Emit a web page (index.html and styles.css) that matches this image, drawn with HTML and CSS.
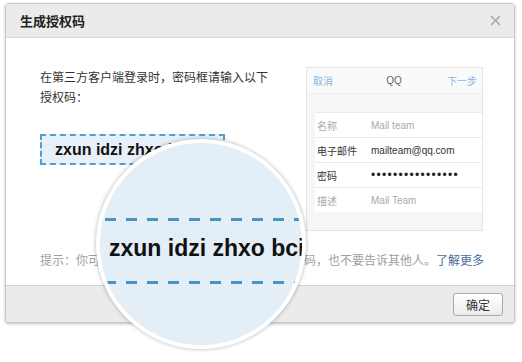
FILE: index.html
```html
<!DOCTYPE html>
<html lang="zh-CN">

<head>
  <meta charset="UTF-8" />
  <title>生成授权码</title>
  <link rel="stylesheet" href="styles.css">
</head>

<body>

  <div class="dialog">
    <div class="dialog-head">
      <span class="dialog-title">生成授权码</span>
      <svg class="close" width="11" height="11" viewBox="0 0 11 11">
        <path d="M1 1L10 10M10 1L1 10" stroke="#a8a8a8" stroke-width="1.6" fill="none" />
      </svg>
    </div>

    <div class="dialog-body">
      <div class="row">
        <div class="left">
          <p class="intro">在第三方客户端登录时，密码框请输入以下授权码：</p>
          <div class="code">zxun idzi zhxo bcio</div>
        </div>

        <div class="phone">
          <div class="nav">
            <span class="nav-link">取消</span>
            <span class="nav-title">QQ</span>
            <span class="nav-link">下一步</span>
          </div>
          <div class="gap"></div>
          <div class="field muted"><span class="label">名称</span><span>Mail team</span></div>
          <div class="field"><span class="label">电子邮件</span><span>mailteam@qq.com</span></div>
          <div class="field"><span class="label">密码</span><span class="dots">••••••••••••••••</span></div>
          <div class="field muted last"><span class="label">描述</span><span>Mail Team</span></div>
          <div class="gap"></div>
        </div>
      </div>

      <p class="hint">提示：你可以随时在设置中关闭它，请勿泄露授权码，也不要告诉其他人。<a class="more">了解更多</a></p>
    </div>

    <div class="dialog-foot">
      <button class="btn">确定</button>
    </div>

    <div class="lens">
      <div class="lens-dash"></div>
      <div class="lens-code">zxun idzi zhxo bcio</div>
      <div class="lens-dash"></div>
    </div>
  </div>

</body>

</html>
```

FILE: styles.css
```css
html,
body {
  min-height: 362px;
}

body {
  margin: 0;
  background-color: #fff;
  font-family: "Liberation Sans", "Noto Sans CJK SC", sans-serif;
  font-size: 12px;
  color: #333;
}

.dialog {
  position: relative;
  width: 508px;
  margin: 3px 0 0 5px;
  border: 1px solid #c9c9c9;
  border-radius: 4px;
  box-shadow: 0 1px 3px rgba(0, 0, 0, 0.25);
  background-color: #fff;
}

.dialog-head {
  height: 33px;
  display: flex;
  align-items: center;
  justify-content: space-between;
  padding: 0 13px 0 14px;
  background-color: #ebebeb;
  border-bottom: 1px solid #d6d6d6;
  border-radius: 4px 4px 0 0;
}

.dialog-title {
  font-family: "Noto Sans CJK SC", sans-serif;
  font-size: 13px;
  font-weight: bold;
  color: #222;
}

.dialog-body {
  padding: 29px 0 15px 34px;
}

.row {
  display: flex;
}

.left {
  width: 236px;
  margin-right: 30px;
}

.intro {
  margin: 0;
  font-family: "Noto Sans CJK SC", sans-serif;
  line-height: 20px;
  color: #333;
}

.code {
  margin-top: 27px;
  width: 168px;
  height: 27px;
  line-height: 27px;
  padding-left: 13px;
  box-sizing: content-box;
  border: 2px dashed #4fa0d2;
  background-color: #e7f0f8;
  font-weight: bold;
  font-size: 16px;
  color: #111;
  white-space: nowrap;
  overflow: hidden;
}

.phone {
  width: 175px;
  border: 1px solid #e4e4e4;
  background-color: #f6f6f8;
  font-family: "Noto Sans CJK SC", sans-serif;
  font-size: 10px;
}

.nav {
  height: 25px;
  display: flex;
  align-items: center;
  justify-content: space-between;
  padding: 0 5px 0 6px;
  background-color: #fafafb;
  border-bottom: 1px solid #efeff1;
}

.nav-link {
  color: #8bb6de;
}

.nav-title {
  font-family: "Liberation Sans", sans-serif;
  color: #666;
  margin-left: 8px;
}

.gap {
  height: 18px;
}

.field {
  height: 24px;
  display: flex;
  align-items: center;
  margin-left: 8px;
  padding-left: 2px;
  background-color: #fff;
  border-bottom: 1px solid #ebebeb;
  color: #333;
  font-family: "Liberation Sans", "Noto Sans CJK SC", sans-serif;
}

.field.last {
  border-bottom: none;
}

.phone .field:nth-child(3) {
  border-top: 1px solid #ebebeb;
}

.field.muted {
  color: #aaa;
}

.label {
  width: 54px;
  font-family: "Noto Sans CJK SC", sans-serif;
}

.dots {
  font-size: 12px;
  letter-spacing: 1.3px;
  color: #222;
}

.hint {
  margin: 19px 0 0;
  font-family: "Noto Sans CJK SC", sans-serif;
  line-height: 20px;
  color: #a0a0a0;
}

.more {
  color: #456d99;
}

.dialog-foot {
  height: 37px;
  display: flex;
  align-items: flex-start;
  justify-content: flex-end;
  padding: 7px 11px 0 0;
  box-sizing: border-box;
  background-color: #ebebeb;
  border-top: 1px solid #d3d3d3;
  border-radius: 0 0 4px 4px;
}

.btn {
  width: 50px;
  height: 23px;
  padding: 0;
  border: 1px solid #a9a9a9;
  border-radius: 3px;
  background: linear-gradient(#ffffff, #ececec);
  font-family: "Noto Sans CJK SC", sans-serif;
  font-size: 12px;
  color: #333;
}

.lens {
  position: absolute;
  left: 90px;
  top: 135px;
  width: 210px;
  height: 210px;
  box-sizing: border-box;
  padding-top: 75px;
  border: 4px solid #fff;
  border-radius: 50%;
  overflow: hidden;
  background-color: #e3eef6;
  box-shadow: 0 0 4px rgba(0, 0, 0, 0.3);
}

.lens-dash {
  height: 3px;
  background: repeating-linear-gradient(90deg, #4b94c0 0 11px, transparent 11px 21px);
  background-position: 5px 0;
}

.lens-code {
  height: 60px;
  line-height: 54px;
  padding-left: 9px;
  font-weight: bold;
  font-size: 23px;
  color: #111;
  white-space: nowrap;
}
```
